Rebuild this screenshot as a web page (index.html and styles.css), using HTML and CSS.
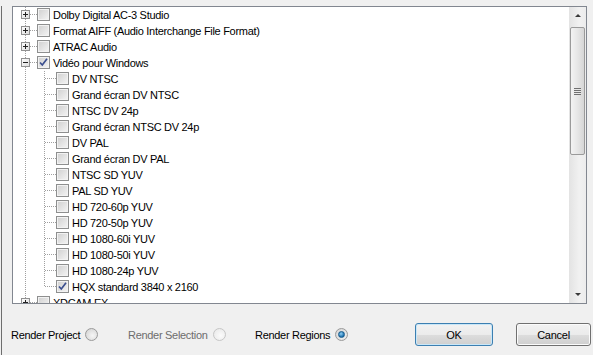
FILE: index.html
```html
<!DOCTYPE html>
<html lang="fr">
<head>
    <meta charset="UTF-8">
    <title>Render</title>
    <link rel="stylesheet" href="styles.css">
</head>
<body>
    <svg class="defs" width="0" height="0">
        <defs>
            <linearGradient id="boxfill" x1="0" y1="0" x2="1" y2="1">
                <stop offset="0" stop-color="#ffffff"/>
                <stop offset="1" stop-color="#dcdcdc"/>
            </linearGradient>
            <symbol id="root-plus" viewBox="0 0 24 16">
                <path d="M12.5 0V16M17 7.5H24" stroke="#a0a0a0" stroke-dasharray="1 1"/>
                <rect x="8.5" y="3.5" width="8" height="8" fill="url(#boxfill)" stroke="#919191"/>
                <path d="M10 7.5H15M12.5 5V10" stroke="#222"/>
            </symbol>
            <symbol id="root-minus" viewBox="0 0 24 16">
                <path d="M12.5 0V16M17 7.5H24" stroke="#a0a0a0" stroke-dasharray="1 1"/>
                <rect x="8.5" y="3.5" width="8" height="8" fill="url(#boxfill)" stroke="#919191"/>
                <path d="M10 7.5H15" stroke="#222"/>
            </symbol>
            <symbol id="child" viewBox="0 0 43 16">
                <path d="M12.5 0V16M31.5 0V16M32 7.5H43" stroke="#a0a0a0" stroke-dasharray="1 1"/>
            </symbol>
            <symbol id="child-last" viewBox="0 0 43 16">
                <path d="M12.5 0V16M31.5 0V8M32 7.5H43" stroke="#a0a0a0" stroke-dasharray="1 1"/>
            </symbol>
            <symbol id="tick" viewBox="0 0 11 11">
                <path d="M2 5.5L4.3 8L9 1.8" fill="none" stroke="#3b4f8f" stroke-width="1.7"/>
            </symbol>
        </defs>
    </svg>

    <div class="dialog">
        <div class="tree-box">
            <div class="tree">
                <div class="row"><svg class="guide" width="24" height="16"><use href="#root-plus"/></svg><span class="check"></span><span class="label">Dolby Digital AC-3 Studio</span></div>
                <div class="row"><svg class="guide" width="24" height="16"><use href="#root-plus"/></svg><span class="check"></span><span class="label">Format AIFF (Audio Interchange File Format)</span></div>
                <div class="row"><svg class="guide" width="24" height="16"><use href="#root-plus"/></svg><span class="check"></span><span class="label">ATRAC Audio</span></div>
                <div class="row"><svg class="guide" width="24" height="16"><use href="#root-minus"/></svg><span class="check"><svg width="11" height="11"><use href="#tick"/></svg></span><span class="label">Vidéo pour Windows</span></div>
                <div class="row"><svg class="guide" width="43" height="16"><use href="#child"/></svg><span class="check"></span><span class="label">DV NTSC</span></div>
                <div class="row"><svg class="guide" width="43" height="16"><use href="#child"/></svg><span class="check"></span><span class="label">Grand écran DV NTSC</span></div>
                <div class="row"><svg class="guide" width="43" height="16"><use href="#child"/></svg><span class="check"></span><span class="label">NTSC DV 24p</span></div>
                <div class="row"><svg class="guide" width="43" height="16"><use href="#child"/></svg><span class="check"></span><span class="label">Grand écran NTSC DV 24p</span></div>
                <div class="row"><svg class="guide" width="43" height="16"><use href="#child"/></svg><span class="check"></span><span class="label">DV PAL</span></div>
                <div class="row"><svg class="guide" width="43" height="16"><use href="#child"/></svg><span class="check"></span><span class="label">Grand écran DV PAL</span></div>
                <div class="row"><svg class="guide" width="43" height="16"><use href="#child"/></svg><span class="check"></span><span class="label">NTSC SD YUV</span></div>
                <div class="row"><svg class="guide" width="43" height="16"><use href="#child"/></svg><span class="check"></span><span class="label">PAL SD YUV</span></div>
                <div class="row"><svg class="guide" width="43" height="16"><use href="#child"/></svg><span class="check"></span><span class="label">HD 720-60p YUV</span></div>
                <div class="row"><svg class="guide" width="43" height="16"><use href="#child"/></svg><span class="check"></span><span class="label">HD 720-50p YUV</span></div>
                <div class="row"><svg class="guide" width="43" height="16"><use href="#child"/></svg><span class="check"></span><span class="label">HD 1080-60i YUV</span></div>
                <div class="row"><svg class="guide" width="43" height="16"><use href="#child"/></svg><span class="check"></span><span class="label">HD 1080-50i YUV</span></div>
                <div class="row"><svg class="guide" width="43" height="16"><use href="#child"/></svg><span class="check"></span><span class="label">HD 1080-24p YUV</span></div>
                <div class="row"><svg class="guide" width="43" height="16"><use href="#child-last"/></svg><span class="check"><svg width="11" height="11"><use href="#tick"/></svg></span><span class="label">HQX standard 3840 x 2160</span></div>
                <div class="row"><svg class="guide" width="24" height="16"><use href="#root-plus"/></svg><span class="check"></span><span class="label">XDCAM EX</span></div>
            </div>
            <div class="scrollbar">
                <div class="sb-button"><span class="arrow-up"></span></div>
                <div class="sb-track">
                    <div class="sb-thumb"><span class="grip"></span></div>
                </div>
                <div class="sb-button"><span class="arrow-down"></span></div>
            </div>
        </div>

        <div class="footer">
            <div class="option opt-project">Render Project <span class="radio"></span></div>
            <div class="option opt-selection disabled">Render Selection <span class="radio"></span></div>
            <div class="option opt-regions">Render Regions <span class="radio checked"></span></div>
            <button class="btn btn-default">OK</button>
            <button class="btn">Cancel</button>
        </div>
    </div>
</body>
</html>
```

FILE: styles.css
```css
body {
    margin: 0;
    padding: 0;
    background-color: #f0f0f0;
    font-family: "Liberation Sans", Arial, sans-serif;
    font-size: 11px;
    letter-spacing: -0.3px;
    color: #000;
}

.defs {
    position: absolute;
    width: 0;
    height: 0;
}

.dialog {
    margin-left: 1px;
    border-left: 1px solid #6e6e6e;
    height: 355px;
    box-sizing: border-box;
}

.tree-box {
    display: flex;
    margin-left: 10px;
    margin-top: 6px;
    width: 575px;
    height: 298px;
    box-sizing: border-box;
    border: 1px solid #828790;
    background-color: #fff;
}

.tree {
    flex: 1;
    overflow: hidden;
}

.row {
    display: flex;
    align-items: center;
    height: 16px;
    white-space: nowrap;
}

.guide {
    flex: none;
    display: block;
}

.check {
    flex: none;
    width: 11px;
    height: 11px;
    border: 1px solid #8e8f8f;
    background: linear-gradient(135deg, #cfcfcf, #f5f5f5);
    box-shadow: inset 0 0 0 1px #f2f2f2;
    margin-top: -1px;
}

.check svg {
    display: block;
}

.label {
    margin-left: 3px;
    line-height: 16px;
}

/* scrollbar */
.scrollbar {
    width: 17px;
    display: flex;
    flex-direction: column;
    background: linear-gradient(to right, #e3e3e3, #f1f1f1 60%, #ececec);
}

.sb-button {
    height: 17px;
    display: flex;
    align-items: center;
    justify-content: center;
}

.arrow-up {
    width: 0;
    height: 0;
    border-left: 3px solid transparent;
    border-right: 3px solid transparent;
    border-bottom: 3px solid #3a3a3a;
}

.arrow-down {
    width: 0;
    height: 0;
    border-left: 3px solid transparent;
    border-right: 3px solid transparent;
    border-top: 3px solid #3a3a3a;
}

.sb-track {
    flex: 1;
    padding-top: 3px;
}

.sb-thumb {
    margin-left: 1px;
    width: 13px;
    height: 126px;
    border: 1px solid #9a9a9a;
    border-radius: 2px;
    background: linear-gradient(to right, #f3f3f3, #e6e6e6 50%, #d6d6d6);
    display: flex;
    align-items: center;
    justify-content: center;
}

.grip {
    width: 7px;
    height: 7px;
    background: repeating-linear-gradient(to bottom, #707070 0, #707070 1px, #e8e8e8 1px, #e8e8e8 2px);
}

/* footer */
.footer {
    display: flex;
    align-items: center;
    margin-top: 19px;
    padding-left: 9px;
    height: 23px;
}

.option {
    display: flex;
    align-items: center;
    flex: none;
}

.opt-project {
    width: 117px;
}

.opt-selection {
    width: 127px;
}

.opt-regions {
    width: 160px;
}

.disabled {
    color: #6d6d6d;
}

.radio {
    width: 11px;
    height: 11px;
    margin-left: 5px;
    border-radius: 50%;
    border: 1px solid #9a9a9a;
    background: radial-gradient(circle at 60% 60%, #f6f6f6, #cfcfcf);
    display: flex;
    align-items: center;
    justify-content: center;
}

.disabled .radio {
    border-color: #c6c6c6;
    background: radial-gradient(circle at 60% 60%, #fbfbfb, #e6e6e6);
}

.radio.checked::after {
    content: "";
    width: 5px;
    height: 5px;
    border-radius: 50%;
    background: radial-gradient(circle at 40% 35%, #8fd0f5, #1c6eab 70%);
    border: 1px solid #155a8a;
}

.btn {
    flex: none;
    width: 75px;
    height: 23px;
    margin-left: 23px;
    border: 1px solid #707070;
    border-radius: 3px;
    background: linear-gradient(to bottom, #f2f2f2 0, #ebebeb 50%, #dddddd 50%, #cfcfcf 100%);
    box-shadow: inset 0 0 0 1px #fbfbfb;
    font-family: "Liberation Sans", Arial, sans-serif;
    font-size: 11px;
    letter-spacing: -0.25px;
    color: #000;
    padding: 0;
}

.btn-default {
    margin-left: 0;
    width: 78px;
    border-color: #3c7fb1;
    box-shadow: inset 0 0 0 1px #c9e7f8;
}
```
